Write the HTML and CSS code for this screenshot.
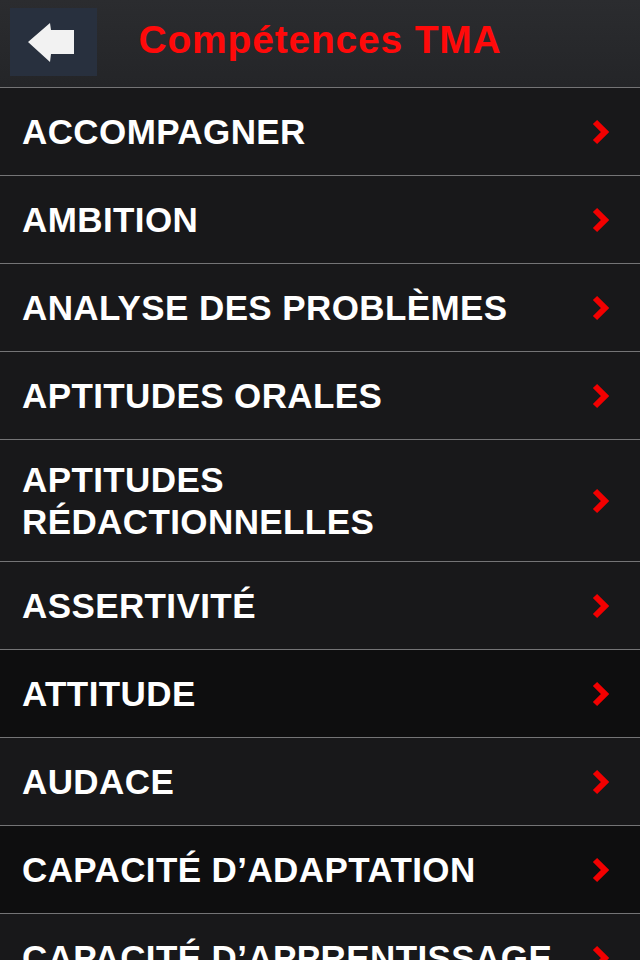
FILE: index.html
```html
<!doctype html>
<html>
<head>
 <title>Compétences TMA</title>
 <meta name=viewport content="width=device-width, initial-scale=1">
 <meta charset="utf-8">
 <link rel="stylesheet" href="styles.css">
</head>
<body>
<div class=topbar>
 <button class=back aria-label="Retour">
  <svg width=46 height=40 viewBox="0 0 46 40">
   <polygon points="0,19 22,0 23,7 46,7 46,31 23,31 22,39" fill="#f2f2f2"/>
  </svg>
 </button>
 <div class=title>Compétences TMA</div>
 <div></div>
</div>
<ul class=list>
 <li class=row><span>ACCOMPAGNER</span><svg class=chev viewBox="0 0 17 26"><polyline points="3,3 13,13 3,23"/></svg></li>
 <li class=row><span>AMBITION</span><svg class=chev viewBox="0 0 17 26"><polyline points="3,3 13,13 3,23"/></svg></li>
 <li class=row><span>ANALYSE DES PROBLÈMES</span><svg class=chev viewBox="0 0 17 26"><polyline points="3,3 13,13 3,23"/></svg></li>
 <li class=row><span>APTITUDES ORALES</span><svg class=chev viewBox="0 0 17 26"><polyline points="3,3 13,13 3,23"/></svg></li>
 <li class="row tall"><span>APTITUDES<br>RÉDACTIONNELLES</span><svg class=chev viewBox="0 0 17 26"><polyline points="3,3 13,13 3,23"/></svg></li>
 <li class=row><span>ASSERTIVITÉ</span><svg class=chev viewBox="0 0 17 26"><polyline points="3,3 13,13 3,23"/></svg></li>
 <li class="row dark"><span>ATTITUDE</span><svg class=chev viewBox="0 0 17 26"><polyline points="3,3 13,13 3,23"/></svg></li>
 <li class=row><span>AUDACE</span><svg class=chev viewBox="0 0 17 26"><polyline points="3,3 13,13 3,23"/></svg></li>
 <li class="row dark"><span>CAPACITÉ D’ADAPTATION</span><svg class=chev viewBox="0 0 17 26"><polyline points="3,3 13,13 3,23"/></svg></li>
 <li class=row><span>CAPACITÉ D’APPRENTISSAGE</span><svg class=chev viewBox="0 0 17 26"><polyline points="3,3 13,13 3,23"/></svg></li>
</ul>
</body>
</html>
```
FILE: styles.css
```css
body {margin:0; background:#18181a; font-family:"Liberation Sans", Arial, Helvetica, sans-serif;}
.topbar {
  height:87px;
  display:grid;
  grid-template-columns:1fr auto 1fr;
  align-items:center;
  background:#27282b;
  background-image:linear-gradient(#2b2c2f, #242528);
}
.back {
  justify-self:start;
  width:87px;
  height:68px;
  margin-left:10px;
  margin-top:-3px;
  padding:0;
  border:0;
  background:#28303e;
  display:flex;
  align-items:center;
  justify-content:center;
}
.back svg {margin-left:-6px; margin-top:2px;}
.title {
  color:#ff0a0a;
  font-size:39px;
  font-weight:bold;
  letter-spacing:0.8px;
  line-height:1;
  padding-bottom:8px;
}
.list {margin:0; padding:0; list-style:none;}
.row {
  height:87px;
  border-top:1px solid #747476;
  background:#18181a;
  display:flex;
  align-items:center;
  justify-content:space-between;
  padding:0 31px 0 22px;
  color:#fff;
  font-size:35px;
  font-weight:bold;
  letter-spacing:0.4px;
  line-height:42px;
}
.row.tall {height:121px;}
.row.dark {background:#0e0e0f;}
.chev {width:17px; height:26px; flex:none;}
.chev polyline {fill:none; stroke:#f20000; stroke-width:6;}
```
